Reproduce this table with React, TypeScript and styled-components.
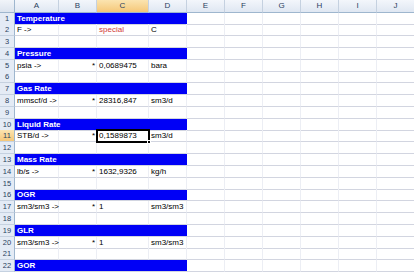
import styled, { createGlobalStyle } from "styled-components";

const GlobalStyle = createGlobalStyle`
  html, body {
    margin: 0;
    padding: 0;
    background: #ffffff;
    overflow: hidden;
  }
`;

const COLS = [44, 38, 52, 38, 38, 38, 38, 38, 38, 38];
const LETTERS = ["A", "B", "C", "D", "E", "F", "G", "H", "I", "J"];
const TEMPLATE = `15px ${COLS.map((c) => c + "px").join(" ")}`;

type RowData =
  | { kind: "bar"; title: string }
  | { kind: "data"; label: string; star?: boolean; value: string; unit: string; red?: boolean; selected?: boolean }
  | { kind: "empty" };

const rows: RowData[] = [
  { kind: "bar", title: "Temperature" },
  { kind: "data", label: "F ->", value: "special", unit: "C", red: true },
  { kind: "empty" },
  { kind: "bar", title: "Pressure" },
  { kind: "data", label: "psia ->", star: true, value: "0,0689475", unit: "bara" },
  { kind: "empty" },
  { kind: "bar", title: "Gas Rate" },
  { kind: "data", label: "mmscf/d ->", star: true, value: "28316,847", unit: "sm3/d" },
  { kind: "empty" },
  { kind: "bar", title: "Liquid Rate" },
  { kind: "data", label: "STB/d ->", star: true, value: "0,1589873", unit: "sm3/d", selected: true },
  { kind: "empty" },
  { kind: "bar", title: "Mass Rate" },
  { kind: "data", label: "lb/s ->", star: true, value: "1632,9326", unit: "kg/h" },
  { kind: "empty" },
  { kind: "bar", title: "OGR" },
  { kind: "data", label: "sm3/sm3 ->", star: true, value: "1", unit: "sm3/sm3" },
  { kind: "empty" },
  { kind: "bar", title: "GLR" },
  { kind: "data", label: "sm3/sm3 ->", star: true, value: "1", unit: "sm3/sm3" },
  { kind: "empty" },
  { kind: "bar", title: "GOR" },
];

const Sheet = styled.div`
  font-family: "Liberation Sans", Arial, sans-serif;
  font-size: 8px;
  color: #000;
  width: 414px;
  height: 273px;
  overflow: hidden;
`;

const Row = styled.div`
  display: grid;
  grid-template-columns: ${TEMPLATE};
  height: 11.8px;
`;

const HeaderRow = styled(Row)`
  height: 12.5px;
`;

const Corner = styled.div`
  background: linear-gradient(#f1f4f9, #dbe3ee);
  border-right: 1px solid #9eb6ce;
  border-bottom: 1px solid #9eb6ce;
  box-sizing: border-box;
`;

const ColHead = styled.div<{ $active?: boolean }>`
  box-sizing: border-box;
  background: ${(p) =>
    p.$active ? "linear-gradient(#fbe4b0, #f5c778)" : "linear-gradient(#f3f6fb, #dfe7f2)"};
  border-right: 1px solid #c5d1e0;
  border-bottom: 1px solid #9eb6ce;
  color: #2a3f5e;
  font-size: 8px;
  line-height: 11.5px;
  text-align: center;
`;

const RowNum = styled.div<{ $active?: boolean }>`
  box-sizing: border-box;
  background: ${(p) => (p.$active ? "linear-gradient(#fbe4b0, #f5c778)" : "#e4ebf5")};
  border-right: 1px solid #9eb6ce;
  border-bottom: 1px solid #c5d1e0;
  color: #2a3f5e;
  font-size: 7.5px;
  line-height: 11px;
  text-align: center;
`;

const Bar = styled.div`
  grid-column: span 4;
  box-sizing: border-box;
  background: #0000f6;
  border-bottom: 1px solid #d2d5e0;
  color: #ffffff;
  font-weight: bold;
  line-height: 11px;
  padding-left: 2px;
  white-space: nowrap;
`;

const Cell = styled.div<{ $align?: "left" | "right"; $red?: boolean; $selected?: boolean }>`
  position: relative;
  box-sizing: border-box;
  border-right: 1px solid #eceef4;
  border-bottom: 1px solid #d2d5e0;
  line-height: 11px;
  padding: 0 ${(p) => (p.$align === "right" ? "1px" : "2px")};
  white-space: nowrap;
  overflow: visible;
  text-align: ${(p) => p.$align ?? "left"};
  color: ${(p) => (p.$red ? "#d23c3c" : "#000")};
  ${(p) =>
    p.$selected &&
    `
    outline: 2px solid #000;
    outline-offset: -1px;
    z-index: 1;
    &::after {
      content: "";
      position: absolute;
      right: -3px;
      bottom: -3px;
      width: 4px;
      height: 4px;
      background: #000;
      border: 1px solid #fff;
      box-sizing: border-box;
    }
  `}
`;

const EmptyCells = ({ count }: { count: number }) => (
  <>
    {Array.from({ length: count }).map((_, i) => (
      <Cell key={i} />
    ))}
  </>
);

export default function App() {
  return (
    <>
      <GlobalStyle />
      <Sheet>
        <HeaderRow>
          <Corner />
          {LETTERS.map((l) => (
            <ColHead key={l} $active={l === "C"}>
              {l}
            </ColHead>
          ))}
        </HeaderRow>
        {rows.map((r, i) => (
          <Row key={i}>
            <RowNum $active={i === 10}>{i + 1}</RowNum>
            {r.kind === "bar" && (
              <>
                <Bar>{r.title}</Bar>
                <EmptyCells count={6} />
              </>
            )}
            {r.kind === "data" && (
              <>
                <Cell>{r.label}</Cell>
                <Cell $align="right">{r.star ? "*" : ""}</Cell>
                <Cell $red={r.red} $selected={r.selected}>
                  {r.value}
                </Cell>
                <Cell>{r.unit}</Cell>
                <EmptyCells count={6} />
              </>
            )}
            {r.kind === "empty" && <EmptyCells count={10} />}
          </Row>
        ))}
      </Sheet>
    </>
  );
}
